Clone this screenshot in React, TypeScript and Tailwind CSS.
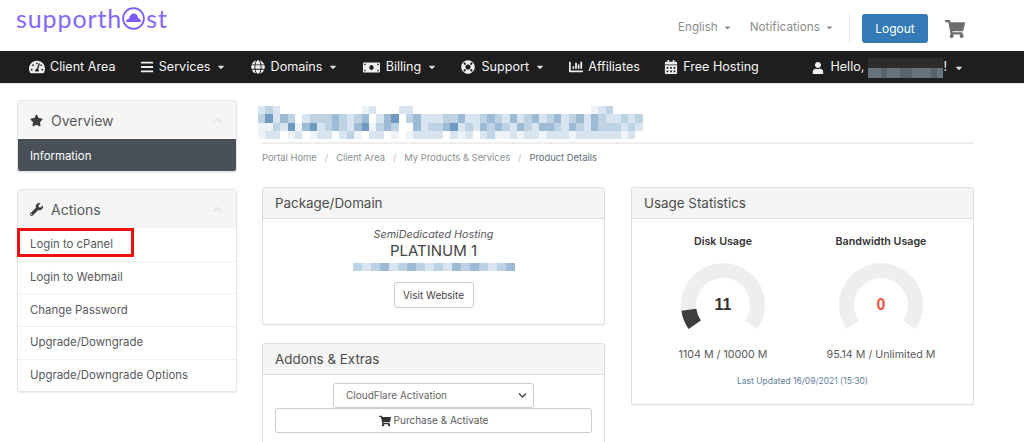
import { FaTachometerAlt, FaBars, FaGlobe, FaMoneyBill, FaLifeRing, FaChartBar, FaCalendarAlt, FaUser, FaShoppingCart, FaStar, FaWrench, FaChevronUp, FaCaretDown, FaChevronDown } from "react-icons/fa";
import type { ReactNode } from "react";

function Mosaic({ w, h, cell, rows, palette }: { w: number; h: number; cell: number; rows: string[]; palette: Record<string, string> }) {
  return (
    <svg width={w} height={h} viewBox={`0 0 ${w} ${h}`} shapeRendering="crispEdges" className="block">
      {rows.map((row, y) =>
        row.split("").map((c, x) =>
          palette[c] ? <rect key={`${x}-${y}`} x={x * cell} y={y * (h / rows.length)} width={cell} height={h / rows.length} fill={palette[c]} /> : null
        )
      )}
    </svg>
  );
}

const pal: Record<string, string> = {
  a: "#eef3f8", b: "#d8e4ef", c: "#bdd2e3", d: "#9dbbd4", e: "#6f9bc2",
};

const titleRows = [
  "bcb...........ab...bb........................abc....",
  "cebdc.bcccdcbcd.bde.cdbbbccdbbcdcbdbcdbcdbcdbdcbbcbc",
  "aacbeadebcdcbdeacdc..dbccdebcbdcdcbdcbddcbdcbdcccbcb",
  "abb.ab.abb.bca.bb.a.abbbb.bab.bcaababbabbbabbbbbbab.",
];

function NavItem({ icon, label, caret, iw, size }: { icon: ReactNode; label: string; caret?: boolean; iw: string; size: string }) {
  return (
    <div className="flex items-center text-[#f5f5f5] text-[12.6px] whitespace-nowrap">
      <span className={`flex items-center text-[#eeeeee] ${iw} ${size}`}>{icon}</span>
      <span>{label}</span>
      {caret && <FaCaretDown className="ml-[6px] text-[10px] text-[#dddddd]" />}
    </div>
  );
}

function SideHead({ icon, label }: { icon: ReactNode; label: string }) {
  return (
    <div className="h-[38px] bg-[#f5f5f5] flex items-center pl-[12px] pr-[13px] text-[#58595b] text-[14px] rounded-t-[3px]">
      <span className="w-[21px] text-[#3d3d3d] text-[13px] flex items-center">{icon}</span>
      <span className="flex-1">{label}</span>
      <FaChevronUp className="text-[11px] text-[#e4e4e4]" />
    </div>
  );
}

function Card({ title, className, children }: { title: string; className?: string; children: ReactNode }) {
  return (
    <div className={`bg-white border border-[#dddddd] rounded-[3px] shadow-[0_1px_1px_rgba(0,0,0,0.05)] ${className ?? ""}`}>
      <div className="h-[31px] bg-[#f5f5f5] border-b border-[#dddddd] flex items-center pl-[12px] text-[13.4px] text-[#4c4c4c] rounded-t-[3px]">{title}</div>
      {children}
    </div>
  );
}

function polar(r: number, deg: number) {
  const a = (deg * Math.PI) / 180;
  return [50 - r * Math.sin(a), 50 + r * Math.cos(a)];
}
function arc(from: number, to: number) {
  const [x1, y1] = polar(34.5, from);
  const [x2, y2] = polar(34.5, to);
  const large = to - from > 180 ? 1 : 0;
  return `M${x1} ${y1}A34.5 34.5 0 ${large} 1 ${x2} ${y2}`;
}

function Gauge({ title, value, valueClass, usage, fill }: { title: string; value: string; valueClass: string; usage: string; fill?: boolean }) {
  return (
    <div className="w-[158px] flex flex-col items-center">
      <div className="text-[10.7px] font-semibold text-[#333333] mt-[15px] leading-[16px]">{title}</div>
      <div className="relative w-[100px] h-[100px] mt-[5px]">
        <svg width="100" height="100" viewBox="0 0 100 100" fill="none">
          <path d={arc(55, 305)} stroke="#eeeeee" strokeWidth="15" />
          {fill && <path d={arc(55, 82)} stroke="#3d3d3d" strokeWidth="15" />}
        </svg>
        <div className={`absolute inset-0 flex items-center justify-center font-['Liberation_Sans',sans-serif] font-bold text-[16px] ${valueClass}`}>{value}</div>
      </div>
      <div className="text-[10.7px] text-[#58595b] leading-[16px] mt-[-8px] whitespace-nowrap">{usage}</div>
    </div>
  );
}

export default function App() {
  return (
    <div className="w-[1024px] h-[442px] overflow-hidden bg-white font-['Inter',sans-serif] text-[#58595b]">
      <header className="h-[51px] flex items-start pl-[16px] pr-[59px]">
        <div className="flex items-center mt-[3px] text-[#8468fb] font-['Lato',sans-serif] font-normal text-[25px] leading-[30px] tracking-[0.9px]">
          <span>supporth</span>
          <svg width="23" height="23" viewBox="0 0 23 23">
            <circle cx="11.5" cy="11.5" r="10.400" fill="none" stroke="#7c5cfc" strokeWidth="1.800" />
            <path d="M4 15c0-2 1.500-3.300 3-3.300C7.600 8.500 9.500 6.500 11.700 6.500c2.400 0 4.200 2 4.500 4.700 1.500.2 2.800 1.600 2.800 3.800H4z" fill="#7c5cfc" />
          </svg>
          <span className="ml-[1px]">st</span>
        </div>
        <div className="ml-auto flex items-center mt-[14px]">
          <div className="flex items-center text-[11.6px] text-[#8c8c8c] mt-[-2px]">
            English <FaCaretDown className="ml-[5px] text-[9px]" />
          </div>
          <div className="flex items-center text-[11.8px] text-[#8c8c8c] ml-[18px] mt-[-2px]">
            Notifications <FaCaretDown className="ml-[5px] text-[9px]" />
          </div>
          <div className="w-px h-[29px] bg-[#e8e8e8] ml-[15px]" />
          <div className="ml-[12px] w-[66px] h-[29px] rounded-[3px] bg-[#337ab7] text-white text-[12px] flex items-center justify-center">Logout</div>
          <FaShoppingCart className="ml-[17px] text-[20px] text-[#6d6d6d]" />
        </div>
      </header>

      <nav className="h-[33px] box-border bg-[#1e1e1e] flex items-center pl-[29px] pr-[60px] pt-[1px] border-b border-[#e8e8e8]">
        <div className="flex items-center gap-[24.2px]">
          <NavItem iw="w-[21px]" size="text-[16px]" icon={<FaTachometerAlt />} label="Client Area" />
          <NavItem iw="w-[19px]" size="text-[14px]" icon={<FaBars />} label="Services" caret />
          <NavItem iw="w-[20px]" size="text-[14px]" icon={<FaGlobe />} label="Domains" caret />
          <NavItem iw="w-[23px]" size="text-[17px]" icon={<FaMoneyBill />} label="Billing" caret />
          <NavItem iw="w-[20px]" size="text-[14px]" icon={<FaLifeRing />} label="Support" caret />
          <NavItem iw="w-[19px]" size="text-[14px]" icon={<FaChartBar />} label="Affiliates" />
          <NavItem iw="w-[19px]" size="text-[14px]" icon={<FaCalendarAlt />} label="Free Hosting" />
        </div>
        <div className="ml-auto flex items-center text-[12.6px] text-[#f5f5f5] whitespace-nowrap">
          <FaUser className="text-[12px] mr-[6px]" />
          Hello,
          <span className="ml-[4px]">
            <Mosaic w={75} h={20} cell={6.3} rows={["333333333333", "445445544454"]} palette={{ "3": "#2c2c2c", "4": "#66737c", "5": "#57636c" }} />
          </span>
          !
          <FaCaretDown className="ml-[7px] text-[10px] text-[#dddddd]" />
        </div>
      </nav>

      <div className="flex pl-[17px] pt-[16px]">
        <aside className="w-[220px] flex flex-col gap-[17px]">
          <div className="rounded-[3px] border border-[#e5e5e5] shadow-[0_1px_1px_rgba(0,0,0,0.08)] overflow-hidden">
            <SideHead icon={<FaStar />} label="Overview" />
            <div className="h-[32px] pt-[3px] bg-[#495057] text-white text-[11.4px] flex items-center pl-[12px]">Information</div>
          </div>
          <div className="rounded-[3px] border border-[#e5e5e5] shadow-[0_1px_1px_rgba(0,0,0,0.08)] relative">
            <SideHead icon={<FaWrench />} label="Actions" />
            {["Login to cPanel", "Login to Webmail", "Change Password", "Upgrade/Downgrade", "Upgrade/Downgrade Options"].map((t, i) => (
              <div key={t} className={`h-[32.7px] flex items-center pl-[12px] text-[11.4px] text-[#58595b] ${i ? "border-t border-[#f0f0f0]" : ""}`}>{t}</div>
            ))}
            <div className="absolute left-[-1px] top-[38px] w-[117px] h-[29px] border-[3px] border-[#ee0f0f]" />
          </div>
        </aside>

        <main className="w-[712px] ml-[25px]">
          <div className="h-[42px] ml-[-4px] pt-[6px]">
            <div className="blur-[0.6px]">
              <Mosaic w={385} h={33} cell={7.4} rows={titleRows} palette={pal} />
            </div>
          </div>
          <div className="h-[2px] bg-[#eeeeee]" />
          <div className="flex items-center text-[9.4px] text-[#8a8f93] mt-[7px] h-[14px] whitespace-nowrap">
            <span>Portal Home</span><span className="mx-[8px] text-[#bbbbbb]">/</span>
            <span>Client Area</span><span className="mx-[8px] text-[#bbbbbb]">/</span>
            <span>My Products &amp; Services</span><span className="mx-[8px] text-[#bbbbbb]">/</span>
            <span className="text-[#5c6b78]">Product Details</span>
          </div>

          <div className="flex gap-[26px] mt-[22px] items-start">
            <div className="w-[343px] flex flex-col gap-[18px]">
              <Card title="Package/Domain" className="h-[138px]">
                <div className="flex flex-col items-center pt-[9px]">
                  <div className="italic text-[10.8px] leading-[14px] text-[#58595b]">SemiDedicated Hosting</div>
                  <div className="text-[15px] leading-[18px] text-[#444444]">PLATINUM 1</div>
                  <div className="mt-[3px] blur-[0.4px]">
                    <Mosaic w={162} h={8} cell={9} rows={["cbcdbcdcbcbdcdcbcd"]} palette={pal} />
                  </div>
                  <div className="mt-[11px] w-[80px] h-[26px] border border-[#cccccc] rounded-[3px] text-[10px] text-[#444444] flex items-center justify-center">Visit Website</div>
                </div>
              </Card>
              <Card title="Addons & Extras" className="h-[120px]">
                <div className="flex flex-col items-center px-[12px] pt-[8px]">
                  <div className="w-[201px] h-[25px] border border-[#cccccc] rounded-[3px] text-[10px] text-[#666666] flex items-center pl-[12px] pr-[6px]">
                    <span className="flex-1">CloudFlare Activation</span>
                    <FaChevronDown className="text-[9px] text-[#444444]" />
                  </div>
                  <div className="w-full h-[25px] border border-[#cccccc] rounded-[3px] text-[10px] text-[#58595b] flex items-center justify-center">
                    <FaShoppingCart className="text-[12px] text-[#333333] mr-[3px]" />Purchase &amp; Activate
                  </div>
                </div>
              </Card>
            </div>

            <Card title="Usage Statistics" className="w-[343px] h-[218px]">
              <div className="flex justify-center pr-[1px]">
                <Gauge title="Disk Usage" value="11" valueClass="text-[#333333]" usage="1104 M / 10000 M" fill />
                <Gauge title="Bandwidth Usage" value="0" valueClass="text-[#f0534a]" usage="95.14 M / Unlimited M" />
              </div>
              <div className="text-center text-[8.5px] text-[#5f7f9e] mt-[12px]">Last Updated 16/09/2021 (15:30)</div>
            </Card>
          </div>
        </main>
      </div>
    </div>
  );
}
